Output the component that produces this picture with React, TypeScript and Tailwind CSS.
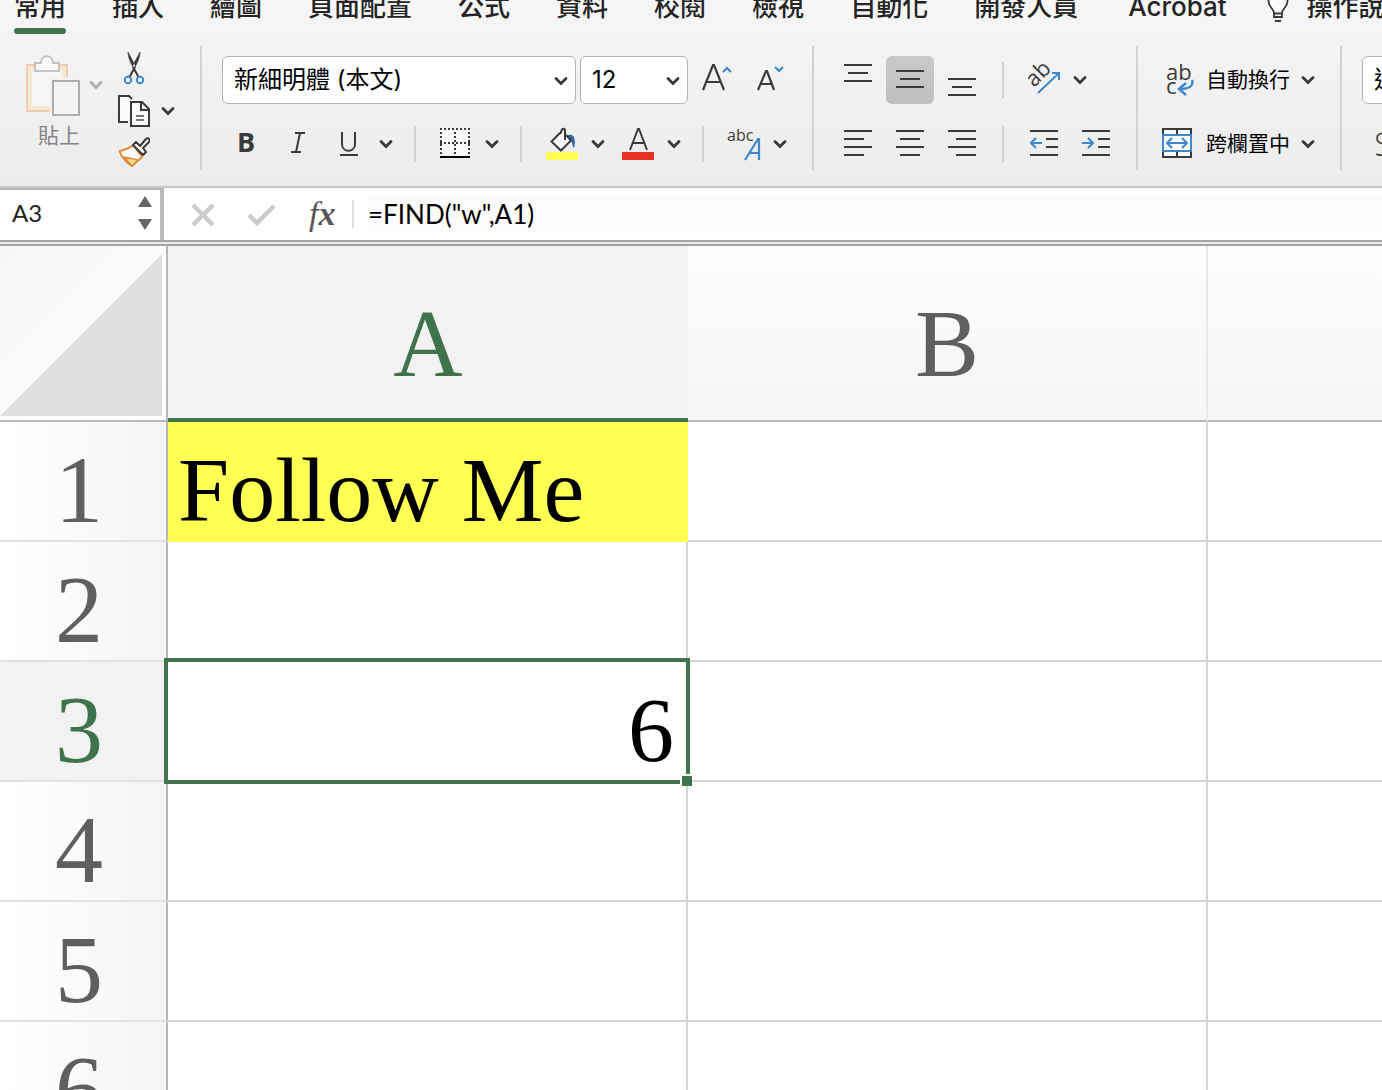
import clsx from "clsx";
import { ReactNode } from "react";

const INK = "#3b3a39";
const BLUE = "#3f87cb";

const TABS = ["常用", "插入", "繪圖", "頁面配置", "公式", "資料", "校閱", "檢視", "自動化", "開發人員", "Acrobat"];

const ROWS = [
    { id: 1, a: "Follow Me" },
    { id: 2, a: "" },
    { id: 3, a: "6" },
    { id: 4, a: "" },
    { id: 5, a: "" },
    { id: 6, a: "" },
];

type IconProps = { w: number; children: ReactNode };

// every ribbon icon is drawn on a strip as tall as a ribbon row
function Icon({ w, children }: IconProps) {
    return (
        <svg width={w} height={48} viewBox={`0 0 ${w} 48`} fill="none" stroke={INK} strokeWidth={2} className="shrink-0">
            {children}
        </svg>
    );
}

function Tool({ label, className, children }: { label: string; className?: string; children: ReactNode }) {
    return (
        <button aria-label={label} className={clsx("flex h-12 shrink-0 items-center justify-center", className)}>
            {children}
        </button>
    );
}

function ChevronMark({ color = INK }: { color?: string }) {
    return (
        <svg width="14" height="10" viewBox="0 0 14 10" fill="none" className="shrink-0">
            <path d="M2 2.5L7 7.5L12 2.5" stroke={color} strokeWidth="2.8" strokeLinecap="round" />
        </svg>
    );
}

function Chevron({ label, className }: { label: string; className?: string }) {
    return (
        <Tool label={label} className={clsx("w-8", className)}>
            <ChevronMark />
        </Tool>
    );
}

function Divider({ className }: { className?: string }) {
    return <div className={clsx("h-9 w-0.5 shrink-0 bg-[#d2d2d2]", className)} />;
}

function Group({ className, children }: { className?: string; children: ReactNode }) {
    return (
        <div className={clsx("flex shrink-0 flex-col gap-4 border-r-2 border-[#d2d2d2] pt-2.5", className)}>
            {children}
        </div>
    );
}

function Row({ children }: { children: ReactNode }) {
    return <div className="flex h-12 items-center">{children}</div>;
}

function Picker({ label, value, className }: { label: string; value: string; className?: string }) {
    return (
        <div className={clsx("relative h-12 shrink-0", className)}>
            <select
                aria-label={label}
                className="h-full w-full appearance-none rounded-md border border-[#b4b4b4] bg-white pl-[11px] text-2xl text-black"
            >
                <option>{value}</option>
            </select>
            <span className="pointer-events-none absolute top-5 right-2">
                <ChevronMark />
            </span>
        </div>
    );
}

function Lines({ rows }: { rows: [number, number, number][] }) {
    return (
        <Icon w={28}>
            {rows.map(([x1, x2, y]) => (
                <path key={y} d={`M${x1} ${y}H${x2}`} />
            ))}
        </Icon>
    );
}

function Tabs() {
    return (
        <nav className="flex h-[54px] items-start gap-[46px] overflow-hidden pl-3.5 text-[26px] leading-[30px] font-medium whitespace-nowrap text-[#242424]">
            {TABS.map((tab, i) => (
                <button key={tab} className={clsx("shrink-0", i === 10 && "ml-1")}>
                    {tab}
                    {i === 0 && <span className="mt-1.5 block h-1.5 rounded-full bg-[#3f734b]" />}
                </button>
            ))}
            <button className="-ml-1.5 flex shrink-0 gap-[18px]">
                <svg width="22" height="32" viewBox="0 0 22 32" fill="#fafafa" stroke={INK} strokeWidth="1.8">
                    <path d="M7 25V21C7 17 1.5 15 1.5 9A9.5 9.5 0 0 1 20.500 9C20.500 15 15 17 15 21V25ZM7 21.500H15" />
                    <path d="M8 29H14" strokeWidth="2" />
                </svg>
                操作說明
            </button>
        </nav>
    );
}

function Clipboard() {
    return (
        <div className="flex w-[202px] shrink-0 border-r-2 border-[#d2d2d2] pl-6">
            <div className="flex flex-col pt-2">
                <div className="flex">
                    <button aria-label="貼上" id="paste">
                        <svg width="58" height="64" viewBox="0 0 58 64" fill="none" strokeWidth="2">
                            <path d="M3 11H43V57H3Z" fill="#f5e8d0" stroke="#efcdb2" />
                            <path d="M8 16H38V52H8Z" fill="#f5f5f5" />
                            <path d="M26 24H60V64H26Z" fill="#f1f1f1" />
                            <path d="M11 17V9H17C17 0 29 0 29 9H35V17Z" fill="#f8f8f8" stroke="#c3c3c3" />
                            <path d="M29 27H55V61H29Z" fill="#f4f4f4" stroke="#adadad" />
                        </svg>
                    </button>
                    <button aria-label="貼上選項" className="ml-[7px] flex h-[62px] items-center">
                        <ChevronMark color="#b0b0b0" />
                    </button>
                </div>
                <label htmlFor="paste" className="pt-1.5 pl-3.5 text-[21px] leading-6 text-[#858585]">
                    貼上
                </label>
            </div>
            <div className="flex flex-col pt-1.5 pl-[15px]">
                <button aria-label="剪下">
                    <svg width="32" height="36" viewBox="0 0 32 36" fill="none" stroke={INK} strokeWidth="2">
                        <path d="M15 15L20.500 25M17 15L11.500 25" />
                        <path d="M10 0C10 5 12 10 16 17L17.500 14ZM22 0C22 5 20 10 16 17L14.500 14Z" fill={INK} strokeWidth="0.600" />
                        <circle cx="10" cy="28" r="3.200" stroke={BLUE} />
                        <circle cx="22" cy="28" r="3.200" stroke={BLUE} />
                    </svg>
                </button>
                <div className="flex h-12 items-center">
                    <button aria-label="複製">
                        <svg width="32" height="34" viewBox="0 0 32 34" fill="#fafafa" stroke={INK} strokeWidth="2">
                            <path d="M10 28H1V2H11L14 5" />
                            <path d="M13 8H24L31 15V32H13ZM23 8V16H31" />
                            <path d="M18 22H26M18 26H26" stroke="#777" />
                        </svg>
                    </button>
                    <button aria-label="複製選項" className="ml-[11px]">
                        <ChevronMark />
                    </button>
                </div>
                <button aria-label="複製格式" className="pt-0.5">
                    <svg width="32" height="34" viewBox="0 0 32 34" fill="#fafafa" strokeWidth="2" strokeLinejoin="round">
                        <path d="M15 9C11 13 6 14 1.500 15C4 22 9 27 14 30L24 21Z" stroke="#e08a3c" />
                        <path d="M6 21L20 24L14 30Z" fill="#f6dc94" stroke="#e08a3c" strokeWidth="1.500" />
                        <path d="M15 9L18 6L22 10L28 3C30 1 33 4 31 6L25 12L28 16L25 19Z" stroke={INK} />
                    </svg>
                </button>
            </div>
        </div>
    );
}

function Ribbon() {
    return (
        <div className="flex h-[124px] overflow-hidden whitespace-nowrap">
            <Clipboard />
            <Group className="pr-4 pl-5">
                <Row>
                    <Picker label="字型" value="新細明體 (本文)" className="w-[354px]" />
                    <Picker label="字型大小" value="12" className="ml-1 w-[108px]" />
                    <Tool label="放大字型" className="ml-3 w-9">
                        <Icon w={36}>
                            <path d="M3 34L13 9H14L24 34M6.500 26H20.500" strokeWidth="2.200" />
                            <path d="M23 16L27 12L31 16" stroke={BLUE} strokeWidth="2.200" />
                        </Icon>
                    </Tool>
                    <Tool label="縮小字型" className="ml-4 w-9">
                        <Icon w={36}>
                            <path d="M6 34L14 15H15L22 34M9 28H20" strokeWidth="2.200" />
                            <path d="M23 11L27 15L31 11" stroke={BLUE} strokeWidth="2.200" />
                        </Icon>
                    </Tool>
                </Row>
                <Row>
                    <Tool label="粗體" className="w-12 pb-1">
                        <span className="font-['Open_Sans'] text-[27px] leading-8 font-bold text-[#3b3a39]">B</span>
                    </Tool>
                    <Tool label="斜體" className="ml-1 w-12">
                        <Icon w={48}>
                            <path d="M21 13H31M17 32H27M26 13L22 32" />
                        </Icon>
                    </Tool>
                    <Tool label="底線" className="ml-1 w-11">
                        <Icon w={44}>
                            <path d="M16 12V24C16 33 29 33 29 24V12M14 35H32" />
                        </Icon>
                    </Tool>
                    <Chevron label="底線選項" />
                    <Divider className="ml-3" />
                    <Tool label="框線" className="ml-6">
                        <Icon w={30}>
                            <rect x="1" y="9" width="28" height="28" fill="#fafafa" stroke="none" />
                            <path d="M0 9H30M0 23H30M1 12V34M15 12V34M29 12V34" strokeDasharray="2 2" />
                            <path d="M0 37H30" stroke="#000" />
                        </Icon>
                    </Tool>
                    <Chevron label="框線選項" className="ml-1.5" />
                    <Divider className="ml-3" />
                    <Tool label="填滿色彩" className="ml-6">
                        <Icon w={32}>
                            <path d="M0 36H32" stroke="#ffff54" strokeWidth="8" />
                            <path d="M22 15C29 13 30 21 28 28C26 27 27 20 22 19Z" fill="#2f65ad" stroke="none" />
                            <path d="M14 13L5.500 21.500L15 30.500L25 20.500L20 15" fill="#fafafa" />
                            <path d="M14 14L15.500 11C16 8 19 8 19 11V20" />
                        </Icon>
                    </Tool>
                    <Chevron label="填滿色彩選項" className="ml-1" />
                    <Tool label="字型色彩" className="ml-2">
                        <Icon w={32}>
                            <path d="M0 36H32" stroke="#e63323" strokeWidth="8" />
                            <path d="M8 30L16 9H17L25 30M11 23H22" />
                        </Icon>
                    </Tool>
                    <Chevron label="字型色彩選項" className="ml-1" />
                    <Divider className="ml-3" />
                    <Tool label="注音標示" className="ml-[22px]">
                        <Icon w={36}>
                            <text x="1" y="21" fontSize="16" fill={INK} stroke="none" className="font-['Open_Sans']">
                                abc
                            </text>
                            <path d="M19 40L32 19H33V40M24 33H33" stroke={BLUE} strokeWidth="2.200" />
                        </Icon>
                    </Tool>
                    <Chevron label="注音標示選項" className="ml-0.5" />
                </Row>
            </Group>
            <Group className="pr-4 pl-5">
                <Row>
                    <Tool label="靠上對齊" className="w-12">
                        <Lines rows={[[0, 28, 9], [4, 24, 17], [0, 28, 25]]} />
                    </Tool>
                    <Tool label="置中對齊" className="ml-1 w-12 rounded-md bg-linear-to-b from-[#c9c9c9] to-[#bfbfbf]">
                        <Lines rows={[[0, 28, 15], [4, 24, 23], [0, 28, 31]]} />
                    </Tool>
                    <Tool label="靠下對齊" className="ml-1 w-12">
                        <Lines rows={[[0, 28, 23], [4, 24, 31], [0, 28, 39]]} />
                    </Tool>
                    <Divider className="ml-4" />
                    <Tool label="方向" className="ml-6">
                        <Icon w={32}>
                            <text
                                x="6"
                                y="32"
                                fontSize="22"
                                fill={INK}
                                stroke="none"
                                transform="rotate(-45 6 32)"
                                className="font-['Open_Sans']"
                            >
                                ab
                            </text>
                            <path d="M10 37L31 17M24 17H31V24" stroke={BLUE} />
                        </Icon>
                    </Tool>
                    <Chevron label="方向選項" className="ml-1" />
                </Row>
                <Row>
                    <Tool label="靠左對齊" className="w-12">
                        <Lines rows={[[0, 28, 11], [0, 20, 19], [0, 28, 27], [0, 20, 35]]} />
                    </Tool>
                    <Tool label="置中" className="ml-1 w-12">
                        <Lines rows={[[0, 28, 11], [4, 24, 19], [0, 28, 27], [4, 24, 35]]} />
                    </Tool>
                    <Tool label="靠右對齊" className="ml-1 w-12">
                        <Lines rows={[[0, 28, 11], [8, 28, 19], [0, 28, 27], [8, 28, 35]]} />
                    </Tool>
                    <Divider className="ml-4" />
                    <Tool label="減少縮排" className="ml-4 w-12">
                        <Icon w={28}>
                            <path d="M0 11H28M16 19H28M16 27H28M0 35H28" />
                            <path d="M12 23H1M6 18L1 23L6 28" stroke={BLUE} />
                        </Icon>
                    </Tool>
                    <Tool label="增加縮排" className="ml-1 w-12">
                        <Icon w={28}>
                            <path d="M0 11H28M16 19H28M16 27H28M0 35H28" />
                            <path d="M0 23H11M6 18L11 23L6 28" stroke={BLUE} />
                        </Icon>
                    </Tool>
                </Row>
            </Group>
            <Group className="pr-4 pl-6">
                <Row>
                    <button className="flex items-center gap-3 text-[21px]">
                        <Icon w={32}>
                            <text x="4" y="24" fontSize="22" fill={INK} stroke="none" className="font-['Open_Sans']">
                                ab
                            </text>
                            <text x="4" y="38" fontSize="22" fill={INK} stroke="none" className="font-['Open_Sans']">
                                c
                            </text>
                            <path d="M30 24C32 30 27 33 18 33M24 27L17 33L24 39" stroke={BLUE} strokeWidth="2.400" />
                        </Icon>
                        自動換行
                    </button>
                    <Chevron label="自動換行選項" className="ml-0.5" />
                </Row>
                <Row>
                    <button className="flex items-center gap-3 text-[21px]">
                        <Icon w={32}>
                            <path d="M1 9H29V37H1Z" fill="#fafafa" />
                            <path d="M15 9V15M15 31V37" />
                            <path d="M1 15H29V31H1Z" fill="#fafafa" stroke={BLUE} />
                            <path d="M5 23H25M10 18L5 23L10 28M20 18L25 23L20 28" stroke={BLUE} />
                        </Icon>
                        跨欄置中
                    </button>
                    <Chevron label="跨欄置中選項" className="ml-0.5" />
                </Row>
            </Group>
            <div className="flex shrink-0 flex-col gap-4 pt-2.5 pl-5">
                <Row>
                    <Picker label="數值格式" value="通用格式" className="w-[260px]" />
                </Row>
                <Row>
                    <Tool label="會計數字格式" className="ml-3">
                        <span className="font-['Open_Sans'] text-[34px] leading-10 font-light text-[#3b3a39]">$</span>
                    </Tool>
                </Row>
            </div>
        </div>
    );
}

function FormulaBar() {
    return (
        <div className="flex h-[52px] bg-white font-['Lato',sans-serif] text-black">
            <div className="flex w-41 shrink-0 items-center border-t-2 border-r-4 border-[#b8b8b8] pr-2 pb-1 pl-3">
                <input aria-label="名稱方塊" defaultValue="A3" className="w-full min-w-0 text-2xl text-[#242424] outline-none" />
                <svg width="14" height="34" viewBox="0 0 14 34" fill="#666" className="shrink-0">
                    <path d="M7 0L14 11H0ZM7 34L14 23H0Z" />
                </svg>
            </div>
            <button aria-label="取消" className="ml-[27px] shrink-0 pt-0.5">
                <svg width="24" height="24" viewBox="0 0 24 24" stroke="#cbcbcb" strokeWidth="4.500">
                    <path d="M2 2L22 22M22 2L2 22" />
                </svg>
            </button>
            <button aria-label="輸入" className="ml-8 shrink-0 pt-0.5">
                <svg width="30" height="24" viewBox="0 0 30 24" fill="none" stroke="#cbcbcb" strokeWidth="4.500">
                    <path d="M2 12L10 20L27 3" />
                </svg>
            </button>
            <button
                aria-label="插入函數"
                className="ml-8 shrink-0 font-['Liberation_Serif',serif] text-[34px] leading-10 font-bold text-[#555] italic"
            >
                <span className="font-normal">f</span>x
            </button>
            <div className="my-3 ml-auto w-0.5 shrink-0 bg-[#dedede]" />
            <input
                aria-label="資料編輯列"
                defaultValue={'=FIND("w",A1)'}
                className="my-2 ml-3.5 w-[calc(100%-368px)] bg-[#fcfcfc] text-[26px] outline-none"
            />
        </div>
    );
}

function Sheet() {
    const colHeader = "h-44 border-b-2 border-b-[#b7b7b7] bg-linear-to-b from-[#fdfdfd] to-[#f5f5f5] p-0 pt-12 align-top font-normal";

    return (
        <table className="w-full table-fixed border-separate border-spacing-0 bg-white font-['Liberation_Serif',serif] text-[96px] leading-[100px]">
            <colgroup>
                <col className="w-[168px]" />
                <col className="w-[520px]" />
                <col className="w-[520px]" />
                <col />
            </colgroup>
            <thead>
                <tr>
                    <td className="h-44 border-r-2 border-b-2 border-[#b7b7b7] bg-linear-to-br from-[#f6f6f6] to-white p-0 align-top">
                        <svg width="162" height="170" viewBox="0 0 162 170">
                            <path d="M162 8V170H0Z" fill="#dfdfdf" />
                        </svg>
                    </td>
                    <th className="h-44 border-b-4 border-[#3f734b] bg-[#f2f2f2] p-0 pt-12 align-top font-normal text-[#3f734b]">
                        A
                    </th>
                    <th className={clsx(colHeader, "border-r-2 border-r-[#e8e8e8] text-[#5f5f5f]")}>B</th>
                    <th className={colHeader} />
                </tr>
            </thead>
            <tbody>
                {ROWS.map(({ id, a }) => (
                    <tr key={id}>
                        <th
                            className={clsx(
                                "h-[120px] border-r-2 border-b-2 border-r-[#b7b7b7] border-b-[#e2e2e2] p-0 pt-[18px] pr-2 align-top font-normal",
                                id === 3
                                    ? "bg-[#f2f2f2] text-[#3f734b]"
                                    : "bg-linear-to-r from-white to-[#f4f4f4] text-[#5f5f5f]",
                            )}
                        >
                            {id}
                        </th>
                        <td
                            className={clsx(
                                "relative h-[120px] border-r-2 border-b-2 p-0 pt-[18px] align-top text-[92px] whitespace-nowrap text-black",
                                id === 1 ? "border-[#ffff54] bg-[#ffff54] pl-2.5" : "border-[#d4d4d4]",
                                id === 3 && "z-10 pr-3 text-right",
                            )}
                        >
                            {a}
                            {id === 3 && (
                                <>
                                    <span className="absolute -top-1 -right-1 -bottom-1 -left-1 border-4 border-[#3f734b]" />
                                    <span className="absolute -right-1.5 -bottom-1.5 size-3 border-t-2 border-l-2 border-white bg-[#3f734b]" />
                                </>
                            )}
                        </td>
                        <td className="border-r-2 border-b-2 border-[#d4d4d4]" />
                        <td className="border-b-2 border-[#d4d4d4]" />
                    </tr>
                ))}
            </tbody>
        </table>
    );
}

function App() {
    return (
        <div className="h-screen overflow-hidden bg-white font-['Inter','Noto_Sans_CJK_TC',sans-serif]">
            <header className="border-b-2 border-[#c8c8c8] bg-linear-to-b from-[#f6f6f6] to-[#ececec] pb-4">
                <div className="-mt-2">
                    <Tabs />
                </div>
                <Ribbon />
            </header>
            <FormulaBar />
            <div className="h-1.5 border-t-2 border-b-2 border-t-[#a4a4a4] border-b-[#a4a4a4] bg-[#ececec]" />
            <Sheet />
        </div>
    );
}

export default App;
